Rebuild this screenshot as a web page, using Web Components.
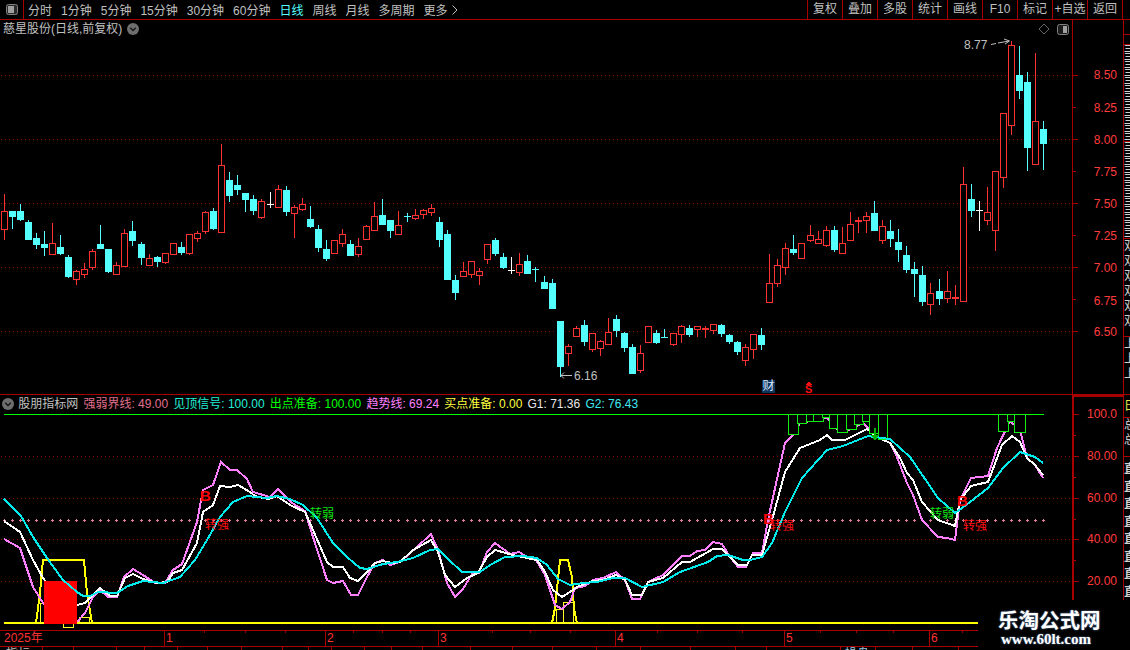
<!DOCTYPE html>
<html>
<head>
<meta charset="utf-8">
<title>K线</title>
<style>
    html, body { margin: 0; padding: 0; background: #000; }
</style>
</head>
<body>
<kline-app></kline-app>
<script>
const FRAME = '#a80000';
const RED = '#ff3232';
const CYAN = '#54ffff';
const FONT = '"Liberation Sans", "Noto Sans CJK SC", sans-serif';

// x of candle number i, the chart gains one pixel every 16-17 candles
const JUMPS = [17, 33, 50, 67, 83, 100, 116];
const candleX = (i) => 4 + 8 * i + JUMPS.filter((j) => i >= j).length;

// type, high, top, bottom, low (page pixels)
const CANDLES = [
    ['r',194,211,229,240],['c',211,211,216,229],['c',204,211,219,221],['c',220,222,239,239],
    ['c',233,238,244,249],['c',231,244,247,256],['r',223,243,254,254],['c',235,247,253,255],
    ['c',255,257,276,278],['r',270,271,279,285],['r',263,269,274,278],['r',249,251,267,270],
    ['c',225,244,248,248],['c',249,249,271,273],['r',262,265,274,274],['r',229,233,266,267],
    ['c',221,231,240,246],['c',242,244,257,265],['r',254,258,265,265],['c',256,257,261,267],
    ['r',253,253,262,264],['r',243,243,254,254],['c',242,247,252,255],['r',234,234,253,255],
    ['r',231,233,238,242],['r',211,212,231,234],['c',208,211,228,230],['r',144,165,232,232],
    ['c',172,180,195,202],['c',175,185,189,195],['c',193,193,199,212],['c',195,199,210,215],
    ['r',199,201,217,219],['w',192,204,204,208],['r',185,189,207,207],['c',186,190,211,216],
    ['r',205,207,213,238],['r',198,204,209,211],['c',206,219,226,228],['c',225,229,247,252],
    ['c',240,249,258,261],['r',240,240,253,253],['r',229,234,243,247],['c',240,244,255,255],
    ['r',238,246,254,257],['r',225,226,239,240],['r',202,216,230,231],['c',199,215,224,225],
    ['c',220,220,230,238],['r',211,225,234,234],['c',213,216,216,222],['r',209,215,218,220],
    ['r',209,210,214,219],['r',204,208,212,216],['c',217,222,239,247],['c',230,234,279,280],
    ['c',275,280,292,300],['r',262,271,276,276],['r',261,261,274,278],['r',268,271,275,285],
    ['r',244,244,259,264],['c',238,240,253,256],['c',253,257,267,269],['w',257,270,270,274],
    ['r',253,264,272,276],['c',255,261,273,274],['c',267,269,269,282],['c',276,282,288,289],
    ['c',279,283,308,308],['c',321,321,366,377],['r',344,346,353,366],['r',326,328,336,336],
    ['c',320,325,341,346],['r',333,333,349,352],['r',340,341,348,356],['r',318,332,344,344],
    ['c',315,319,330,337],['c',332,333,347,352],['c',344,347,373,373],['r',345,353,370,373],
    ['r',326,326,342,342],['c',330,333,342,344],['c',329,337,337,337],['r',333,333,344,346],
    ['r',325,326,334,343],['c',325,328,334,337],['r',326,326,329,337],['r',326,328,328,338],
    ['r',324,324,330,334],['c',324,325,333,337],['c',334,335,341,344],['c',341,342,351,355],
    ['r',344,347,360,366],['r',334,334,349,359],['c',328,335,344,350],['r',254,283,302,302],
    ['r',259,265,283,287],['r',243,248,267,275],['c',235,249,252,255],['r',243,243,258,258],
    ['r',225,235,240,242],['r',231,239,243,244],['r',226,230,245,247],['c',226,230,249,252],
    ['r',227,243,253,253],['r',212,224,240,240],['r',217,220,220,233],['r',212,216,220,233],
    ['c',201,213,230,231],['r',220,226,240,244],['c',220,231,238,247],['c',229,242,249,262],
    ['c',246,255,269,273],['c',262,269,273,297],['c',266,275,301,306],['r',283,293,304,315],
    ['c',279,291,298,305],['r',271,291,298,303],['r',285,297,297,305],['r',167,184,301,301],
    ['c',184,199,210,217],['w',201,210,210,231],['r',187,212,220,225],['r',171,171,230,251],
    ['r',113,113,177,188],['r',41,45,125,135],['c',46,75,90,99],['c',72,82,147,171],
    ['r',53,121,164,165],['c',121,129,143,170]
];

const LINE_PINK = '4,539 20,548 33,587 43,603 60,618 78,621 85,613 93,597 100,590 108,597 117,597 124,577 133,569 143,575 155,583 165,583 173,570 182,564 197,522 203,490 213,485 221,462 230,470 237,470 247,479 253,492 270,497 278,489 292,503 305,511 313,537 327,580 333,583 343,581 351,595 358,595 367,577 375,563 383,560 390,565 400,562 417,547 431,534 438,550 447,583 455,597 463,589 472,574 479,573 487,552 495,543 510,554 519,552 527,557 535,558 545,575 555,605 562,609 570,602 575,588 585,586 593,580 603,578 616,572 625,580 632,599 640,599 648,582 663,575 682,556 690,556 697,551 705,550 713,542 722,544 730,557 738,567 746,567 753,553 762,553 768,520 785,443 793,435 800,423 827,418 837,429 845,432 863,423 877,437 890,443 897,457 907,483 913,495 922,520 938,537 947,538 955,540 960,500 971,478 988,476 997,448 1010,421 1020,430 1027,458 1035,465 1043,478';
const LINE_WHITE = '4,521 20,532 33,560 43,578 60,600 77,605 85,603 100,588 110,596 117,596 125,578 133,574 143,579 157,583 167,582 173,573 182,570 197,543 203,512 213,505 220,486 230,487 238,485 250,492 255,496 268,499 277,496 290,505 305,512 313,530 327,562 333,567 343,567 350,578 358,581 367,572 375,563 383,561 392,563 400,562 413,550 431,540 438,552 445,575 455,587 467,578 478,573 487,557 495,550 513,555 527,558 537,560 545,572 553,590 562,597 570,592 577,587 593,581 603,580 616,575 625,580 632,595 642,595 648,582 663,578 682,562 690,562 713,549 722,549 730,557 738,565 747,565 752,555 762,555 772,520 785,472 800,448 820,440 827,435 832,440 845,440 867,429 877,437 890,443 900,458 907,473 913,480 922,502 938,520 955,526 960,500 971,486 988,482 1002,445 1012,436 1020,442 1027,458 1035,465 1043,475';
const LINE_CYAN = '4,499 21,516 33,537 47,558 63,580 77,592 83,596 90,596 98,592 117,593 128,586 143,581 163,583 180,577 195,560 207,540 220,517 233,502 247,496 267,498 277,496 290,499 303,505 317,518 333,543 347,557 360,568 367,569 383,564 397,562 413,558 430,550 438,549 447,558 462,572 480,572 490,565 505,557 523,556 537,558 547,565 558,579 570,585 583,583 597,582 613,578 625,578 642,587 663,582 680,572 708,562 717,556 728,555 743,560 750,560 762,557 772,543 785,512 802,478 827,450 843,446 868,436 875,437 890,439 910,457 938,498 955,513 962,508 970,502 988,488 1003,468 1020,452 1035,457 1043,463';

// signal boxes hanging from the 100 line: x1, x2, bottom
const GREEN_BOXES = [
    [788,798,434],[797,806,423],[806,813,421],[813,823,421],[822,829,417],
    [829,837,428],[837,847,432],[846,856,429],[854,863,424],[862,869,421],
    [869,878,433],[878,887,439],[998,1008,431],[1007,1014,421],[1014,1025,432]
];

class ToolBtn extends HTMLElement {
    connectedCallback() {
        this.attachShadow({ mode: 'open' });
        this.shadowRoot.innerHTML = `
            <style>
                :host {
                    display: block;
                    font: 12px ${FONT};
                    color: #c0c0c0;
                    white-space: nowrap;
                }
                :host([active]) { color: #54ffff; }
                :host([cell]) {
                    width: 35px;
                    height: 19px;
                    line-height: 19px;
                    text-align: center;
                    box-sizing: border-box;
                    border-left: 1px solid ${FRAME};
                }
            </style>
            <slot></slot>
        `;
    }
}
customElements.define('tool-btn', ToolBtn);

class TopBar extends HTMLElement {
    connectedCallback() {
        this.attachShadow({ mode: 'open' });
        const periods = ['分时','1分钟','5分钟','15分钟','30分钟','60分钟','日线','周线','月线','多周期','更多'];
        const tools = ['复权','叠加','多股','统计','画线','F10','标记','+自选','返回'];
        this.shadowRoot.innerHTML = `
            <style>
                :host {
                    display: flex;
                    height: 20px;
                    box-sizing: border-box;
                    border-bottom: 1px solid ${FRAME};
                    background: #000;
                }
                .logo {
                    width: 24px;
                    box-sizing: border-box;
                    border-right: 1px solid ${FRAME};
                    display: flex;
                    align-items: center;
                    justify-content: center;
                }
                .periods {
                    display: flex;
                    align-items: center;
                    gap: 9px;
                    padding-left: 4px;
                    flex: 1;
                }
                .more { margin-left: -5px; color: #c0c0c0; }
                .tools { display: flex; margin-right: 7px; border-right: 1px solid ${FRAME}; }
            </style>
            <div class="logo">
                <svg width="12" height="11" viewBox="0 0 12 11">
                    <rect x="0.5" y="0.5" width="11" height="10" rx="2" fill="#2a2a2a" stroke="#808080"/>
                    <rect x="2" y="2" width="6" height="7" fill="#a0a0a0"/>
                </svg>
            </div>
            <div class="periods">
                ${periods.map((p) => `<tool-btn ${p === '日线' ? 'active' : ''}>${p}</tool-btn>`).join('')}
                <svg class="more" width="6" height="10" viewBox="0 0 6 10">
                    <path d="M0.5 0.5 L5 5 L0.5 9.5" fill="none" stroke="#c0c0c0"/>
                </svg>
            </div>
            <div class="tools">
                ${tools.map((t) => `<tool-btn cell>${t}</tool-btn>`).join('')}
            </div>
        `;
    }
}
customElements.define('top-bar', TopBar);

class DropIcon extends HTMLElement {
    connectedCallback() {
        this.attachShadow({ mode: 'open' });
        this.shadowRoot.innerHTML = `
            <style>
                :host { display: inline-flex; width: 12px; height: 12px; }
            </style>
            <svg width="12" height="12" viewBox="0 0 12 12">
                <circle cx="6" cy="6" r="6" fill="#6e6e6e"/>
                <path d="M3.2 4.8 L6 7.6 L8.8 4.8" fill="none" stroke="#161616" stroke-width="1.4"/>
            </svg>
        `;
    }
}
customElements.define('drop-icon', DropIcon);

// pieces both chart panes share
const chartLabel = (x, y, text, extra) =>
    `<span class="lbl" style="left:${x}px;top:${y}px;${extra || ''}">${text}</span>`;
const axisLabel = (y, text, top) =>
    `<span class="ax" style="top:${y - top - 7}px">${text}</span>`;
const chartStyle = `
    :host {
        display: block;
        position: relative;
        overflow: hidden;
        box-sizing: border-box;
        font: 12px ${FONT};
        background: #000;
    }
    svg.plot { position: absolute; left: 0; top: 0; display: block; }
    .lbl, .ax { position: absolute; line-height: 14px; white-space: nowrap; }
    .ax { right: 6px; color: #ff3c3c; }
`;

class PricePane extends HTMLElement {
    connectedCallback() {
        this.attachShadow({ mode: 'open' });
        const top = 20;
        let s = '';
        [75.5, 139.5, 203.5, 267.5, 331.5].forEach((y) => {
            s += `<line x1="1" x2="1072" y1="${y}" y2="${y}" stroke="#8c0000" stroke-dasharray="1 3"/>`;
            s += `<line x1="1073" x2="1078" y1="${y}" y2="${y}" stroke="${FRAME}"/>`;
        });
        [107.5, 171.5, 235.5, 299.5].forEach((y) => {
            s += `<line x1="1073" x2="1076" y1="${y}" y2="${y}" stroke="${FRAME}"/>`;
        });
        CANDLES.forEach((c, i) => s += this.candle(candleX(i), c));
        const levels = [[75,'8.50'],[108,'8.25'],[140,'8.00'],[172,'7.75'],[204,'7.50'],[236,'7.25'],[268,'7.00'],[301,'6.75'],[332,'6.50']];
        this.shadowRoot.innerHTML = `
            <style>
                ${chartStyle}
                :host { height: 375px; border-bottom: 1px solid ${FRAME}; }
                .title {
                    position: absolute;
                    left: 3px;
                    top: 2px;
                    height: 14px;
                    line-height: 14px;
                    display: flex;
                    align-items: center;
                    gap: 5px;
                    color: #c0c0c0;
                    white-space: nowrap;
                }
                .axis-line { position: absolute; left: 1072px; top: 0; bottom: 0; width: 1px; background: ${FRAME}; }
                .tag { background: #10355c; color: #d8e8ff; width: 13px; height: 13px; line-height: 13px; text-align: center; }
            </style>
            <svg class="plot" width="1124" height="374" viewBox="0 ${top} 1124 374" shape-rendering="crispEdges">
                ${s}
                <g fill="none" stroke="#c0c0c0" shape-rendering="auto">
                    <path d="M991 44.5 L996 43.5 M998 43 L1009 41 M1004 39 L1009.5 41 L1005 44"/>
                    <path d="M561 375.5 H572 M564 372.5 L561 375.5 L564 378.5"/>
                    <path d="M1044 24 L1049 29 L1044 34 L1039 29 Z" stroke="#666"/>
                    <rect x="1057.5" y="24.5" width="11" height="10" rx="2" stroke="#808080" fill="#1c1c1c"/>
                    <rect x="1063" y="26" width="4" height="7" fill="#a0a0a0" stroke="none"/>
                </g>
                <path d="M808.5 381.5 l3 3 h-6 Z" fill="#ff1010"/>
            </svg>
            <div class="axis-line"></div>
            <div class="title">慈星股份(日线,前复权)<drop-icon></drop-icon></div>
            ${levels.map((l) => axisLabel(l[0], l[1], top)).join('')}
            ${chartLabel(964, 45 - top - 7, '8.77', 'color:#c0c0c0')}
            ${chartLabel(574, 376 - top - 7, '6.16', 'color:#c0c0c0')}
            ${chartLabel(762, 380 - top, '财', '').replace('class="lbl"', 'class="lbl tag"')}
            ${chartLabel(805, 382 - top, 'S', 'color:#ff1010;font-weight:bold;font-size:11px')}
        `;
    }

    candle(x, c) {
        const [type, high, bodyTop, bodyBot, low] = c;
        const col = type === 'r' ? RED : type === 'c' ? CYAN : '#ffffff';
        let o = `<rect x="${x}" y="${high}" width="1" height="${bodyTop - high}" fill="${col}"/>`;
        o += `<rect x="${x}" y="${bodyBot}" width="1" height="${low - bodyBot}" fill="${col}"/>`;
        if (bodyBot - bodyTop < 1) {
            // doji, just a dash across the wick
            o += `<rect x="${x - 3}" y="${bodyTop}" width="7" height="${type === 'r' ? 2 : 1}" fill="${col}"/>`;
        } else if (type === 'r') {
            o += `<rect x="${x - 3 + 0.5}" y="${bodyTop + 0.5}" width="6" height="${bodyBot - bodyTop}" fill="#000" stroke="${col}"/>`;
        } else {
            o += `<rect x="${x - 3}" y="${bodyTop}" width="7" height="${bodyBot - bodyTop + 1}" fill="${col}"/>`;
        }
        return o;
    }
}
customElements.define('price-pane', PricePane);

class IndicatorPane extends HTMLElement {
    connectedCallback() {
        this.attachShadow({ mode: 'open' });
        const top = 395;
        let s = '';
        [456.5, 498.5, 539.5, 581.5].forEach((y) => {
            s += `<line x1="1" x2="1072" y1="${y}" y2="${y}" stroke="#8c0000" stroke-dasharray="1 3"/>`;
        });
        [414.5, 456.5, 498.5, 539.5, 581.5].forEach((y) => {
            s += `<line x1="1074" x2="1079" y1="${y}" y2="${y}" stroke="${FRAME}"/>`;
        });
        [435.5, 477.5, 519.5, 560.5].forEach((y) => {
            s += `<line x1="1074" x2="1076" y1="${y}" y2="${y}" stroke="${FRAME}"/>`;
        });
        // the 49 line is a row of small pink crosses
        for (let i = 0; i < 130; i++) {
            const x = candleX(i);
            s += `<path d="M${x - 1} 520.5 h3 M${x + 0.5} 519 v3" stroke="#e07a9a"/>`;
        }
        const poly = (pts, col, w) => `<polyline points="${pts}" fill="none" stroke="${col}" stroke-width="${w}"/>`;
        s += `<rect x="4" y="622" width="974" height="2" fill="#ffff00"/>`;
        s += poly('36,623 40,593 43,560 84,560 87,593 92,623', '#ffff00', 2);
        s += poly('552,623 555,608 560,560 568,560 572,577 574,608 577,623', '#ffff00', 2);
        [[40,603,4,20],[63,623,10,4],[79,617,10,6],[556,609,7,14],[563,602,10,21]].forEach((b) => {
            s += `<rect x="${b[0] + 0.5}" y="${b[1] + 0.5}" width="${b[2]}" height="${b[3]}" fill="none" stroke="#ffff20"/>`;
        });
        s += poly(LINE_PINK, '#ff80ff', 2);
        s += poly(LINE_WHITE, '#ffffff', 2);
        s += `<rect x="44" y="581" width="33" height="43" fill="#ff0000"/>`;
        s += `<rect x="4" y="414" width="1040" height="1" fill="#00ff00"/>`;
        // the boxes hide what is under them, only the cyan line runs over
        GREEN_BOXES.forEach((b) => {
            s += `<rect x="${b[0] + 0.5}" y="414.5" width="${b[1] - b[0]}" height="${b[2] - 414}" fill="#000" stroke="#10f010"/>`;
        });
        s += poly(LINE_CYAN, '#00ecec', 2);
        s += `<path d="M874 428 h2 v7 h3 l-4 6 l-4 -6 h3 Z" fill="#00b400"/>`;
        const legend = [
            ['强弱界线: 49.00', '#e0708c'], ['见顶信号: 100.00', '#20f0d8'], ['出点准备: 100.00', '#00ff00'],
            ['趋势线: 69.24', '#ff80ff'], ['买点准备: 0.00', '#ffff40'], ['G1: 71.36', '#e8e8e8'], ['G2: 76.43', '#40e8f0']
        ];
        const marks = [
            [200, 489, 'B', 'color:#ff0000;font-size:15px;font-weight:bold'],
            [763, 512, 'B', 'color:#ff0000;font-size:15px;font-weight:bold'],
            [957, 494, 'B', 'color:#ff0000;font-size:15px;font-weight:bold'],
            [205, 518, '转强', 'color:#ff1010'], [770, 519, '转强', 'color:#ff1010'], [963, 519, '转强', 'color:#ff1010'],
            [310, 507, '转弱', 'color:#10e810'], [930, 507, '转弱', 'color:#10e810']
        ];
        const levels = [[414,'100.0'],[456,'80.00'],[498,'60.00'],[539,'40.00'],[581,'20.00']];
        this.shadowRoot.innerHTML = `
            <style>
                ${chartStyle}
                :host { height: 235px; }
                .legend {
                    position: absolute;
                    left: 2px;
                    top: 2px;
                    height: 14px;
                    line-height: 14px;
                    display: flex;
                    align-items: center;
                    gap: 5.2px;
                    white-space: nowrap;
                    color: #c0c0c0;
                }
                .legend drop-icon { margin-right: -1px; }
                .axis-line { position: absolute; left: 1072px; top: 0; height: 205px; width: 2px; background: ${FRAME}; }
                .side-line { position: absolute; left: 1072px; right: 0; top: 0; height: 2px; background: ${FRAME}; }
            </style>
            <svg class="plot" width="1124" height="235" viewBox="0 ${top} 1124 235" shape-rendering="crispEdges">${s}</svg>
            <div class="side-line"></div>
            <div class="axis-line"></div>
            <div class="legend">
                <drop-icon></drop-icon>
                <span>股朋指标网</span>
                ${legend.map((l) => `<span style="color:${l[1]}">${l[0]}</span>`).join('')}
            </div>
            ${marks.map((m) => chartLabel(m[0], m[1] - top, m[2], m[3])).join('')}
            ${levels.map((l) => axisLabel(l[0], l[1], top)).join('')}
        `;
    }
}
customElements.define('indicator-pane', IndicatorPane);

class TimeAxis extends HTMLElement {
    connectedCallback() {
        this.attachShadow({ mode: 'open' });
        const months = [[164,'1'],[325,'2'],[438,'3'],[615,'4'],[784,'5'],[929,'6']];
        const upper = [204,245,285,353,382,410,492,530,570,657,697,742,820,856,893,962];
        const lower = [42,73,116,144,177,207,241,282,308,331,364,391,422,470,512,552,596,640,690,735,766,840,875,912,958];
        let s = '';
        months.forEach((m) => s += `<rect x="${m[0]}" y="0" width="1" height="16" fill="${FRAME}"/>`);
        upper.forEach((x) => s += `<rect x="${x}" y="0" width="1" height="3" fill="${FRAME}"/>`);
        lower.forEach((x) => s += `<rect x="${x}" y="16" width="1" height="4" fill="${FRAME}"/>`);
        this.shadowRoot.innerHTML = `
            <style>
                :host {
                    display: block;
                    position: relative;
                    height: 20px;
                    overflow: hidden;
                    font: 12px ${FONT};
                    color: ${RED};
                    background: #000;
                }
                .row {
                    position: relative;
                    height: 17px;
                    box-sizing: border-box;
                    width: 978px;
                    border-top: 1px solid ${FRAME};
                    border-bottom: 1px solid ${FRAME};
                }
                svg { position: absolute; left: 0; top: 0; }
                span { position: absolute; top: 0; line-height: 14px; }
                .tabs { top: 17px; color: #c0c0c0; white-space: nowrap; }
            </style>
            <div class="row">
                <span style="left:4px">2025年</span>
                ${months.map((m) => `<span style="left:${m[0] + 2}px">${m[1]}</span>`).join('')}
            </div>
            <svg width="978" height="20">${s}</svg>
            <span class="tabs" style="left:6px">指标</span>
            <span class="tabs" style="left:845px;color:#9ac8e0">操盘</span>
        `;
    }
}
customElements.define('time-axis', TimeAxis);

class SideStrip extends HTMLElement {
    connectedCallback() {
        this.attachShadow({ mode: 'open' });
        // the window cuts this panel off, only the start of each text shows
        const rows = (n, ch) => Array(n).fill(ch).join('<br>');
        this.shadowRoot.innerHTML = `
            <style>
                :host {
                    display: flex;
                    flex-direction: column;
                    height: 580px;
                    overflow: hidden;
                    border-left: 1px solid ${FRAME};
                    box-sizing: border-box;
                    color: #d0d0d0;
                    font: 12px ${FONT};
                    background: #000;
                }
                section { overflow: hidden; border-bottom: 1px solid ${FRAME}; box-sizing: border-box; flex: none; }
                .tiny { font-size: 8px; font-weight: bold; line-height: 8px; }
                .mid { line-height: 15px; }
                .big { font-weight: bold; line-height: 17.5px; border: 0; padding-top: 4px; }
            </style>
            <section class="tiny" style="height:15px"></section>
            <section class="tiny" style="height:10px"></section>
            <section class="tiny" style="height:97px">${rows(12, '三')}</section>
            <section class="tiny" style="height:97px">${rows(12, '三')}</section>
            <section class="mid" style="height:98px">${rows(6, '双')}</section>
            <section class="mid" style="height:58px">${rows(3, '上')}</section>
            <section style="height:23px;color:#e8e848;line-height:22px">日</section>
            <section class="mid" style="height:39px">${rows(2, '总')}</section>
            <section class="big" style="height:143px">${rows(8, '直')}</section>
        `;
    }
}
customElements.define('side-strip', SideStrip);

class SiteMark extends HTMLElement {
    connectedCallback() {
        this.attachShadow({ mode: 'open' });
        this.shadowRoot.innerHTML = `
            <style>
                :host {
                    position: absolute;
                    left: 978px;
                    top: 600px;
                    width: 152px;
                    height: 50px;
                    background: #000;
                    color: #fff;
                    display: flex;
                    flex-direction: column;
                    align-items: flex-start;
                    padding-left: 20px;
                    box-sizing: border-box;
                }
                .name {
                    font: bold 20.5px/24px "Noto Sans CJK SC", sans-serif;
                    margin-top: 7px;
                    text-shadow: 0 0 2px #6a90c0;
                    white-space: nowrap;
                }
                .url {
                    font: bold 15px/16px "Liberation Serif", serif;
                    margin-left: 3px;
                    text-shadow: 0 0 2px #6a90c0;
                }
            </style>
            <div class="name">乐淘公式网</div>
            <div class="url">www.60lt.com</div>
        `;
    }
}
customElements.define('site-mark', SiteMark);

class KlineApp extends HTMLElement {
    connectedCallback() {
        this.attachShadow({ mode: 'open' });
        this.shadowRoot.innerHTML = `
            <style>
                :host {
                    display: block;
                    position: relative;
                    width: 1130px;
                    height: 650px;
                    overflow: hidden;
                    background: #000;
                }
                .body { display: grid; grid-template-columns: 1123px 7px; }
                .charts { display: flex; flex-direction: column; width: 1123px; }
            </style>
            <top-bar></top-bar>
            <div class="body">
                <div class="charts">
                    <price-pane></price-pane>
                    <indicator-pane></indicator-pane>
                    <time-axis></time-axis>
                </div>
                <side-strip></side-strip>
            </div>
            <site-mark></site-mark>
        `;
    }
}
customElements.define('kline-app', KlineApp);
</script>
</body>
</html>
